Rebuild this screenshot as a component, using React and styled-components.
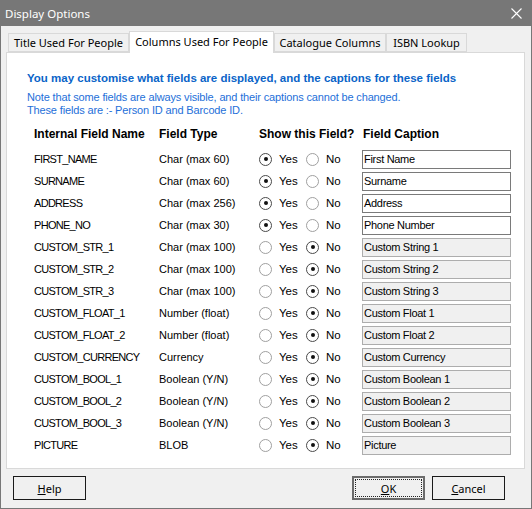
import React from 'react';
import styled, { createGlobalStyle } from 'styled-components';

const Global = createGlobalStyle`
  body {
    margin: 0;
    background: #f0f0f0;
  }
`

const Window = styled.div`
  width: 532px;
  height: 509px;
  box-sizing: border-box;
  border: 1px solid #777777;
  border-top: none;
  background: #f0f0f0;
  display: flex;
  flex-direction: column;
  font-family: "Liberation Sans", Arial, sans-serif;
  font-size: 11px;
  color: #000;
`

const TitleBar = styled.div`
  height: 26px;
  margin: 0 -1px;
  background: #777777;
  display: flex;
  align-items: center;
  justify-content: space-between;
  padding: 0 10px 0 5px;
  color: #ffffff;
  font-family: "Noto Sans", "Open Sans", sans-serif;
  font-size: 11.5px;
`

const Body = styled.div`
  flex: 1;
  display: flex;
  flex-direction: column;
  padding: 5px 6px 0 5px;
`

const TabStrip = styled.div`
  display: flex;
  align-items: flex-end;
  padding-left: 2px;
  height: 21px;
  position: relative;
  z-index: 1;
`

const Tab = styled.div`
  width: ${p => p.$w}px;
  height: ${p => (p.$active ? '22px' : '19px')};
  margin-bottom: ${p => (p.$active ? '-1px' : '0')};
  box-sizing: border-box;
  background: ${p => (p.$active ? '#ffffff' : '#f0f0f0')};
  border: 1px solid #d9d9d9;
  border-bottom: ${p => (p.$active ? 'none' : '1px solid #d9d9d9')};
  display: flex;
  align-items: center;
  justify-content: center;
  padding-bottom: ${p => (p.$active ? '2px' : '0')};
  white-space: nowrap;
  font-family: "Noto Sans", "Open Sans", sans-serif;
  font-size: 11px;
  position: relative;
  z-index: ${p => (p.$active ? 2 : 1)};
`

const Panel = styled.div`
  height: 417px;
  box-sizing: border-box;
  background: #ffffff;
  border: 1px solid #d9d9d9;
  padding: 17px 0 0 20px;
`

const Headline = styled.div`
  color: #0a64c8;
  font-weight: bold;
  font-size: 11.5px;
  line-height: 16px;
`

const Note = styled.div`
  color: #1e6fd9;
  font-size: 11px;
  letter-spacing: -0.15px;
  line-height: 13px;
  margin-top: 5px;
`

const Grid = styled.div`
  display: grid;
  grid-template-columns: 125px 100px 104px 148px;
  grid-template-rows: 25px;
  grid-auto-rows: 22px;
  margin: 6px 0 0 7px;
  align-items: center;
`

const HeadCell = styled.div`
  font-weight: bold;
  font-size: 12px;
  line-height: 22px;
  align-self: start;
  white-space: nowrap;
`

const Cell = styled.div`
  white-space: nowrap;
  letter-spacing: ${p => (p.$caps ? '-0.7px' : '0')};
`

const Choice = styled.div`
  display: flex;
  align-items: center;
`

const Radio = styled.span`
  width: 13px;
  height: 13px;
  box-sizing: border-box;
  border-radius: 50%;
  border: 1px solid ${p => (p.$on ? '#4a4a4a' : '#a0a0a0')};
  display: inline-flex;
  align-items: center;
  justify-content: center;
  margin-right: 7px;
  &::after {
    content: '';
    width: 4px;
    height: 4px;
    border-radius: 50%;
    background: ${p => (p.$on ? '#111' : 'transparent')};
  }
`

const RadioLabel = styled.span`
  width: 27px;
  font-size: 11.5px;
`

const Caption = styled.div`
  height: 19px;
  box-sizing: border-box;
  border: 1px solid ${p => (p.$disabled ? '#adadad' : '#7a7a7a')};
  background: ${p => (p.$disabled ? '#f0f0f0' : '#ffffff')};
  padding: 0 1px;
  display: flex;
  align-items: center;
  font-size: 11px;
  letter-spacing: -0.3px;
  white-space: nowrap;
  margin-left: -1px;
`

const Footer = styled.div`
  display: flex;
  justify-content: space-between;
  align-items: center;
  padding: 7px 20px 0 7px;
`

const Right = styled.div`
  display: flex;
  gap: 7px;
`

const Button = styled.button`
  width: 73px;
  height: 24px;
  box-sizing: border-box;
  background: #f0f0f0;
  border: ${p => (p.$default ? '2px solid #6b6b6b' : '1px solid #1a1a1a')};
  font-family: "Noto Sans", "Open Sans", sans-serif;
  font-size: 11px;
  color: #000;
  padding: 0;
  display: flex;
  align-items: center;
  justify-content: center;
  position: relative;
  ${p => p.$default && `
    &::after {
      content: '';
      position: absolute;
      inset: 1px;
      border: 1px dotted #222;
    }
  `}
`

const U = styled.span`
  text-decoration: underline;
`

const Close = () => (
  <svg width="11" height="11" viewBox="0 0 11 11">
    <path d="M0.5 0.5 L10.5 10.5 M10.5 0.5 L0.5 10.5" stroke="#ffffff" strokeWidth="1.1" />
  </svg>
)

const tabs = [
  ['Title Used For People', 121],
  ['Columns Used For People', 145, true],
  ['Catalogue Columns', 112],
  ['ISBN Lookup', 81],
]

const fields = [
  ['FIRST_NAME', 'Char (max 60)', true, 'First Name'],
  ['SURNAME', 'Char (max 60)', true, 'Surname'],
  ['ADDRESS', 'Char (max 256)', true, 'Address'],
  ['PHONE_NO', 'Char (max 30)', true, 'Phone Number'],
  ['CUSTOM_STR_1', 'Char (max 100)', false, 'Custom String 1'],
  ['CUSTOM_STR_2', 'Char (max 100)', false, 'Custom String 2'],
  ['CUSTOM_STR_3', 'Char (max 100)', false, 'Custom String 3'],
  ['CUSTOM_FLOAT_1', 'Number (float)', false, 'Custom Float 1'],
  ['CUSTOM_FLOAT_2', 'Number (float)', false, 'Custom Float 2'],
  ['CUSTOM_CURRENCY', 'Currency', false, 'Custom Currency'],
  ['CUSTOM_BOOL_1', 'Boolean (Y/N)', false, 'Custom Boolean 1'],
  ['CUSTOM_BOOL_2', 'Boolean (Y/N)', false, 'Custom Boolean 2'],
  ['CUSTOM_BOOL_3', 'Boolean (Y/N)', false, 'Custom Boolean 3'],
  ['PICTURE', 'BLOB', false, 'Picture'],
]

const App = () => {
  return (
    <Window>
      <Global />
      <TitleBar>
        <span>Display Options</span>
        <Close />
      </TitleBar>
      <Body>
        <TabStrip>
          {tabs.map(([label, w, active]) => (
            <Tab key={label} $w={w} $active={active}>{label}</Tab>
          ))}
        </TabStrip>
        <Panel>
          <Headline>You may customise what fields are displayed, and the captions for these fields</Headline>
          <Note>
            Note that some fields are always visible, and their captions cannot be changed.<br />
            These fields are :- Person ID and Barcode ID.
          </Note>
          <Grid>
            <HeadCell>Internal Field Name</HeadCell>
            <HeadCell>Field Type</HeadCell>
            <HeadCell>Show this Field?</HeadCell>
            <HeadCell>Field Caption</HeadCell>
            {fields.map(([name, type, shown, caption]) => (
              <React.Fragment key={name}>
                <Cell $caps>{name}</Cell>
                <Cell>{type}</Cell>
                <Choice>
                  <Radio $on={shown} />
                  <RadioLabel>Yes</RadioLabel>
                  <Radio $on={!shown} />
                  <RadioLabel>No</RadioLabel>
                </Choice>
                <Caption $disabled={!shown}>{caption}</Caption>
              </React.Fragment>
            ))}
          </Grid>
        </Panel>
        <Footer>
          <Button><U>H</U>elp</Button>
          <Right>
            <Button $default><U>O</U>K</Button>
            <Button><U>C</U>ancel</Button>
          </Right>
        </Footer>
      </Body>
    </Window>
  )
}

export default App
